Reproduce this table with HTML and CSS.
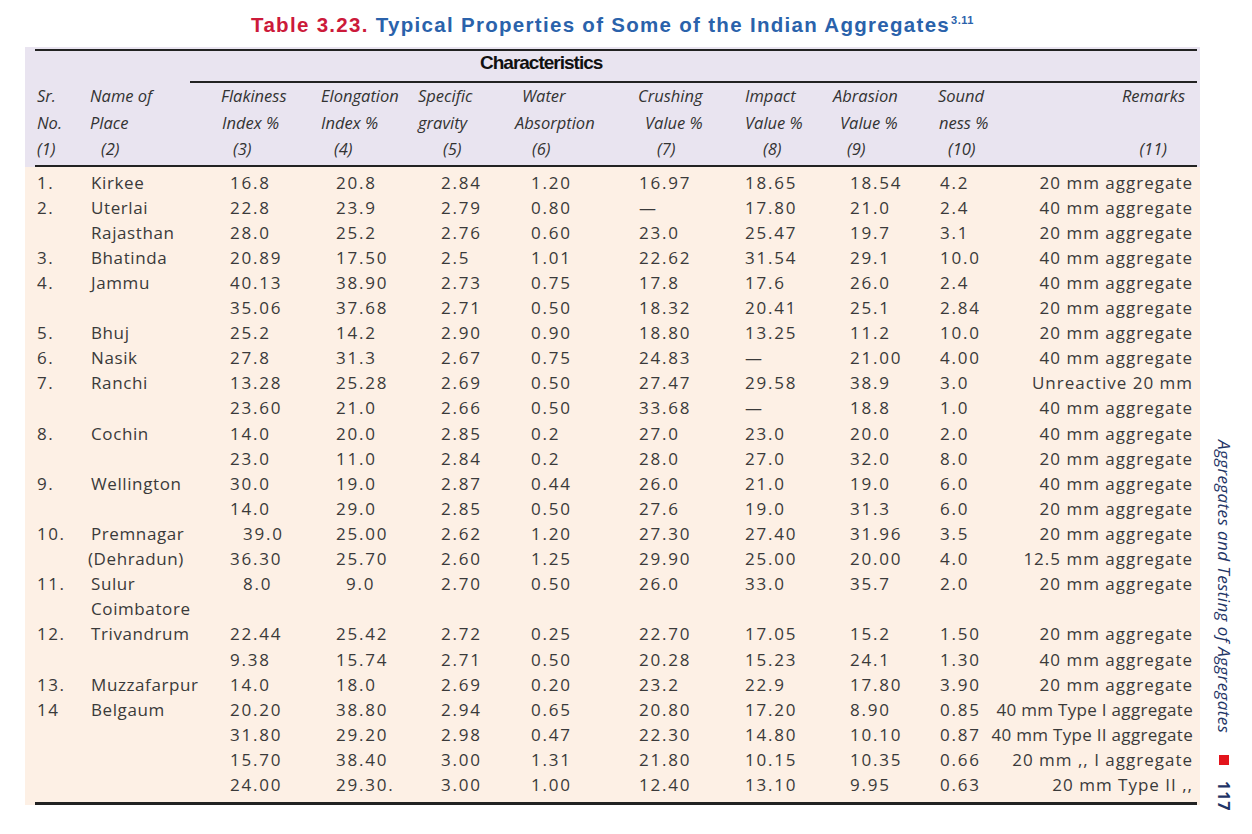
FILE: index.html
```html
<!DOCTYPE html>
<html lang="en">
<head>
<meta charset="utf-8">
<title>Table 3.23 Typical Properties of Some of the Indian Aggregates</title>
<link rel="stylesheet" href="styles.css">
</head>
<body>
<div class="page">
  <main class="main">
    <h1 class="title"><span class="t-num">Table 3.23.</span> Typical Properties of Some of the Indian Aggregates<sup>3.11</sup></h1>
    <div class="tbl">
      <div class="thead">
        <div class="thead-in">
          <div class="char-row"><span class="char-label">Characteristics</span></div>
          <div class="row hrow">
            <span><i>Sr.</i><i>No.</i><i>(1)</i></span>
            <span><i>Name of</i><i>Place</i><i>(2)</i></span>
            <span><i>Flakiness</i><i>Index %</i><i>(3)</i></span>
            <span><i>Elongation</i><i>Index %</i><i>(4)</i></span>
            <span><i>Specific</i><i>gravity</i><i>(5)</i></span>
            <span><i>Water</i><i>Absorption</i><i>(6)</i></span>
            <span><i>Crushing</i><i>Value %</i><i>(7)</i></span>
            <span><i>Impact</i><i>Value %</i><i>(8)</i></span>
            <span><i>Abrasion</i><i>Value %</i><i>(9)</i></span>
            <span><i>Sound</i><i>ness %</i><i>(10)</i></span>
            <span><i>Remarks</i><i>&nbsp;</i><i>(11)</i></span>
          </div>
        </div>
      </div>
      <div class="tbody">
        <div class="tbody-in">
          <div class="row"><span>1.</span><span>Kirkee</span><span>16.8</span><span>20.8</span><span>2.84</span><span>1.20</span><span>16.97</span><span>18.65</span><span>18.54</span><span>4.2</span><span>20 mm aggregate</span></div>
          <div class="row"><span>2.</span><span>Uterlai</span><span>22.8</span><span>23.9</span><span>2.79</span><span>0.80</span><span>—</span><span>17.80</span><span>21.0</span><span>2.4</span><span>40 mm aggregate</span></div>
          <div class="row"><span></span><span>Rajasthan</span><span>28.0</span><span>25.2</span><span>2.76</span><span>0.60</span><span>23.0</span><span>25.47</span><span>19.7</span><span>3.1</span><span>20 mm aggregate</span></div>
          <div class="row"><span>3.</span><span>Bhatinda</span><span>20.89</span><span>17.50</span><span>2.5</span><span>1.01</span><span>22.62</span><span>31.54</span><span>29.1</span><span>10.0</span><span>40 mm aggregate</span></div>
          <div class="row"><span>4.</span><span>Jammu</span><span>40.13</span><span>38.90</span><span>2.73</span><span>0.75</span><span>17.8</span><span>17.6</span><span>26.0</span><span>2.4</span><span>40 mm aggregate</span></div>
          <div class="row"><span></span><span></span><span>35.06</span><span>37.68</span><span>2.71</span><span>0.50</span><span>18.32</span><span>20.41</span><span>25.1</span><span>2.84</span><span>20 mm aggregate</span></div>
          <div class="row"><span>5.</span><span>Bhuj</span><span>25.2</span><span>14.2</span><span>2.90</span><span>0.90</span><span>18.80</span><span>13.25</span><span>11.2</span><span>10.0</span><span>20 mm aggregate</span></div>
          <div class="row"><span>6.</span><span>Nasik</span><span>27.8</span><span>31.3</span><span>2.67</span><span>0.75</span><span>24.83</span><span>—</span><span>21.00</span><span>4.00</span><span>40 mm aggregate</span></div>
          <div class="row"><span>7.</span><span>Ranchi</span><span>13.28</span><span>25.28</span><span>2.69</span><span>0.50</span><span>27.47</span><span>29.58</span><span>38.9</span><span>3.0</span><span>Unreactive 20 mm</span></div>
          <div class="row"><span></span><span></span><span>23.60</span><span>21.0</span><span>2.66</span><span>0.50</span><span>33.68</span><span>—</span><span>18.8</span><span>1.0</span><span>40 mm aggregate</span></div>
          <div class="row"><span>8.</span><span>Cochin</span><span>14.0</span><span>20.0</span><span>2.85</span><span>0.2</span><span>27.0</span><span>23.0</span><span>20.0</span><span>2.0</span><span>40 mm aggregate</span></div>
          <div class="row"><span></span><span></span><span>23.0</span><span>11.0</span><span>2.84</span><span>0.2</span><span>28.0</span><span>27.0</span><span>32.0</span><span>8.0</span><span>20 mm aggregate</span></div>
          <div class="row"><span>9.</span><span>Wellington</span><span>30.0</span><span>19.0</span><span>2.87</span><span>0.44</span><span>26.0</span><span>21.0</span><span>19.0</span><span>6.0</span><span>40 mm aggregate</span></div>
          <div class="row"><span></span><span></span><span>14.0</span><span>29.0</span><span>2.85</span><span>0.50</span><span>27.6</span><span>19.0</span><span>31.3</span><span>6.0</span><span>20 mm aggregate</span></div>
          <div class="row"><span>10.</span><span>Premnagar</span><span class="shift">39.0</span><span>25.00</span><span>2.62</span><span>1.20</span><span>27.30</span><span>27.40</span><span>31.96</span><span>3.5</span><span>20 mm aggregate</span></div>
          <div class="row"><span></span><span class="paren">(Dehradun)</span><span>36.30</span><span>25.70</span><span>2.60</span><span>1.25</span><span>29.90</span><span>25.00</span><span>20.00</span><span>4.0</span><span>12.5 mm aggregate</span></div>
          <div class="row"><span>11.</span><span>Sulur</span><span class="shift">8.0</span><span class="shift">9.0</span><span>2.70</span><span>0.50</span><span>26.0</span><span>33.0</span><span>35.7</span><span>2.0</span><span>20 mm aggregate</span></div>
          <div class="row"><span></span><span>Coimbatore</span><span></span><span></span><span></span><span></span><span></span><span></span><span></span><span></span><span></span></div>
          <div class="row"><span>12.</span><span>Trivandrum</span><span>22.44</span><span>25.42</span><span>2.72</span><span>0.25</span><span>22.70</span><span>17.05</span><span>15.2</span><span>1.50</span><span>20 mm aggregate</span></div>
          <div class="row"><span></span><span></span><span>9.38</span><span>15.74</span><span>2.71</span><span>0.50</span><span>20.28</span><span>15.23</span><span>24.1</span><span>1.30</span><span>40 mm aggregate</span></div>
          <div class="row"><span>13.</span><span>Muzzafarpur</span><span>14.0</span><span>18.0</span><span>2.69</span><span>0.20</span><span>23.2</span><span>22.9</span><span>17.80</span><span>3.90</span><span>20 mm aggregate</span></div>
          <div class="row"><span>14</span><span>Belgaum</span><span>20.20</span><span>38.80</span><span>2.94</span><span>0.65</span><span>20.80</span><span>17.20</span><span>8.90</span><span>0.85</span><span class="tight">40 mm Type I aggregate</span></div>
          <div class="row"><span></span><span></span><span>31.80</span><span>29.20</span><span>2.98</span><span>0.47</span><span>22.30</span><span>14.80</span><span>10.10</span><span>0.87</span><span class="tight">40 mm Type II aggregate</span></div>
          <div class="row"><span></span><span></span><span>15.70</span><span>38.40</span><span>3.00</span><span>1.31</span><span>21.80</span><span>10.15</span><span>10.35</span><span>0.66</span><span>20 mm ,, I aggregate</span></div>
          <div class="row"><span></span><span></span><span>24.00</span><span>29.30.</span><span>3.00</span><span>1.00</span><span>12.40</span><span>13.10</span><span>9.95</span><span>0.63</span><span>20 mm Type II ,,</span></div>
        </div>
      </div>
    </div>
  </main>
  <aside class="side">
    <span class="side-text">Aggregates and Testing of Aggregates</span>
    <span class="side-mark"></span>
    <span class="side-page">117</span>
  </aside>
</div>
</body>
</html>
```

FILE: styles.css
```css
* { box-sizing: border-box; }
html, body { margin: 0; padding: 0; background: #ffffff; }
body { font-family: "Open Sans", "DejaVu Sans", sans-serif; color: #3a3a3a; }

.page { display: flex; width: 1252px; height: 834px; }
.main { width: 1200px; padding-left: 25px; }

.title {
  margin: 0;
  height: 47px;
  padding-top: 14px;
  text-align: center;
  font-family: "Liberation Sans", Arial, sans-serif;
  font-weight: bold;
  font-size: 20.5px;
  line-height: 22px;
  letter-spacing: 1.3px;
  color: #2a62ab;
}
.title .t-num { color: #cc1a3a; }
.title sup { font-size: 11px; vertical-align: 8px; line-height: 0; letter-spacing: 0.5px; margin-left: 1px; }

.tbl { width: 1175px; }

.thead { background: #e9e4f0; padding: 2px 3px 0 10px; }
.thead-in { border-top: 2px solid #222; border-bottom: 2px solid #222; padding-bottom: 2px; }
.char-row {
  margin-left: 155px;
  height: 32px;
  border-bottom: 2px solid #222;
  padding-left: 290px;
}
.char-label {
  font-family: "Liberation Sans", Arial, sans-serif;
  font-weight: bold;
  font-size: 19px;
  line-height: 24px;
  letter-spacing: -1px;
  color: #111;
}

.tbody { background: #fdf0e5; padding: 0 3px 0 10px; }
.tbody-in { padding-top: 3px; padding-bottom: 5px; border-bottom: 3px solid #222; }

.row {
  display: grid;
  grid-template-columns: 55px 125px 105px 95px 97px 124px 106px 88px 106px 45px 216px;
  height: 25.12px;
  font-size: 17px;
  line-height: 25px;
  white-space: nowrap;
}
.row > span { display: block; }
.tbody .row > span:nth-child(1) { padding-left: 2px; letter-spacing: 1.5px; }
.tbody .row > span:nth-child(2) { padding-left: 1px; letter-spacing: 0.6px; }
.tbody .row > span:nth-child(n+3) { letter-spacing: 1.8px; }
.tbody .row > span:nth-child(3) { padding-left: 15px; }
.tbody .row > span:nth-child(4) { padding-left: 16px; }
.tbody .row > span:nth-child(5) { padding-left: 26px; }
.tbody .row > span:nth-child(6) { padding-left: 19px; }
.tbody .row > span:nth-child(7) { padding-left: 3px; }
.tbody .row > span:nth-child(8) { padding-left: 3px; }
.tbody .row > span:nth-child(9) { padding-left: 20px; }
.tbody .row > span:nth-child(10) { padding-left: 4px; }
.tbody .row > span:nth-child(11) {
  justify-self: unsafe end;
  padding-right: 4px;
  letter-spacing: 1px;
}
.tbody .row > span:nth-child(11).tight { letter-spacing: 0.3px; }
.tbody .row > span:nth-child(3).shift { padding-left: 28px; }
.tbody .row > span:nth-child(4).shift { padding-left: 26px; }
.tbody .row > span.paren { margin-left: -3px; }

.hrow { height: auto; color: #333; }
.hrow > span { display: flex; flex-direction: column; }
.hrow i { display: block; height: 26.5px; line-height: 26px; font-size: 16.5px; font-style: italic; }
.hrow > span:nth-child(1) i { padding-left: 2px; }
.hrow > span:nth-child(2) i:nth-child(3) { padding-left: 11px; }
.hrow > span:nth-child(3) i:nth-child(1) { padding-left: 6px; }
.hrow > span:nth-child(3) i:nth-child(2) { padding-left: 7px; }
.hrow > span:nth-child(3) i:nth-child(3) { padding-left: 18px; }
.hrow > span:nth-child(4) i { padding-left: 1px; }
.hrow > span:nth-child(4) i:nth-child(3) { padding-left: 14px; }
.hrow > span:nth-child(5) i { padding-left: 3px; }
.hrow > span:nth-child(5) i:nth-child(3) { padding-left: 28px; }
.hrow > span:nth-child(6) i:nth-child(1) { padding-left: 10px; }
.hrow > span:nth-child(6) i:nth-child(2) { padding-left: 3px; }
.hrow > span:nth-child(6) i:nth-child(3) { padding-left: 20px; }
.hrow > span:nth-child(7) i:nth-child(1) { padding-left: 2px; }
.hrow > span:nth-child(7) i:nth-child(2) { padding-left: 9px; }
.hrow > span:nth-child(7) i:nth-child(3) { padding-left: 21px; }
.hrow > span:nth-child(8) i { padding-left: 3px; }
.hrow > span:nth-child(8) i:nth-child(3) { padding-left: 21px; }
.hrow > span:nth-child(9) i:nth-child(1) { padding-left: 3px; }
.hrow > span:nth-child(9) i:nth-child(2) { padding-left: 10px; }
.hrow > span:nth-child(9) i:nth-child(3) { padding-left: 17px; }
.hrow > span:nth-child(10) i:nth-child(1) { padding-left: 2px; }
.hrow > span:nth-child(10) i:nth-child(2) { padding-left: 3px; }
.hrow > span:nth-child(10) i:nth-child(3) { padding-left: 12px; }
.hrow > span:nth-child(11) { align-items: flex-end; }
.hrow > span:nth-child(11) i:nth-child(1) { padding-right: 12px; }
.hrow > span:nth-child(11) i:nth-child(3) { padding-right: 30px; }

.side {
  flex: 1;
  display: flex;
  flex-direction: column;
  align-items: center;
  padding-top: 440px;
  padding-right: 4px;
  color: #1f3566;
}
.side-text {
  writing-mode: vertical-rl;
  font-style: italic;
  font-size: 17px;
  line-height: 18px;
  letter-spacing: 0.4px;
}
.side-mark {
  display: block;
  width: 10px;
  height: 10px;
  margin-top: 22px;
  background: #e3141c;
}
.side-page {
  writing-mode: vertical-rl;
  margin-top: 16px;
  font-weight: bold;
  font-size: 16px;
  line-height: 18px;
  letter-spacing: 1px;
}
```
